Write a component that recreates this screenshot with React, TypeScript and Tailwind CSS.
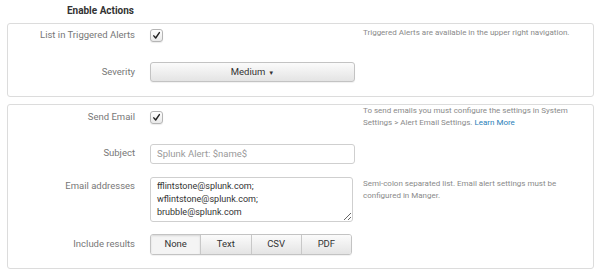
import { ReactNode } from 'react';

function Check() {
  return (
    <span className="flex h-[13px] w-[13px] items-center justify-center rounded-[3px] border border-[#b5b5b5] bg-gradient-to-b from-white to-[#e9e9e9] shadow-[0_1px_1px_rgba(0,0,0,0.08)]">
      <svg width="9" height="9" viewBox="0 0 10 10">
        <path d="M2 5.4 L4.1 7.8 L8.2 1.8" fill="none" stroke="#222" strokeWidth="1.6" strokeLinecap="round" strokeLinejoin="round" />
      </svg>
    </span>
  );
}

function Row({ label, children, help, className = '', helpClass = '' }: { label: string; children: ReactNode; help?: ReactNode; className?: string; helpClass?: string }) {
  return (
    <div className={`flex items-start ${className}`}>
      <div className="w-[127px] shrink-0 text-right text-[9.5px] leading-[14px] text-[#777]">{label}</div>
      <div className="ml-[15px] w-[205px] shrink-0">{children}</div>
      {help && <div className={`ml-[8px] w-[216px] text-[8px] leading-[12px] text-[#8a8a8a] ${helpClass}`}>{help}</div>}
    </div>
  );
}

const segments = ['None', 'Text', 'CSV', 'PDF'];

export default function App() {
  return (
    <div className="h-[275px] w-[600px] bg-white px-[7px] pt-[4px] font-['Roboto',sans-serif]">
      <div className="w-[127px] text-right text-[10px] font-bold leading-[14px] text-[#333]">Enable Actions</div>

      <div className="mt-[5px] h-[74px] w-[587px] rounded-[3px] border border-[#dcdcdc] pt-[4px]">
        <Row label="List in Triggered Alerts" help="Triggered Alerts are available in the upper right navigation." helpClass="-mt-[1px]">
          <div className="pt-[1px]">
            <Check />
          </div>
        </Row>
        <Row label="Severity" className="mt-[23px]">
          <div className="-mt-[3px] flex h-[20px] w-[205px] items-center justify-center rounded-[3px] border border-[#c3c3c3] bg-gradient-to-b from-[#fbfbfb] to-[#e4e4e4] text-[9.5px] text-[#333] shadow-[0_1px_1px_rgba(0,0,0,0.06)]">
            Medium <span className="ml-[3px] text-[6px]">▼</span>
          </div>
        </Row>
      </div>

      <div className="mt-[7px] h-[165px] w-[587px] rounded-[3px] border border-[#dcdcdc] pt-[5px]">
        <Row
          label="Send Email"
          helpClass="-mt-[5px]"
          help={
            <>
              To send emails you must configure the settings in System Settings &gt; Alert Email Settings.{' '}
              <a className="text-[#2a80b9]">Learn More</a>
            </>
          }
        >
          <div className="pt-[1px]">
            <Check />
          </div>
        </Row>
        <Row label="Subject" className="mt-[17px]">
          <div className="-mt-[2px] flex h-[20px] w-[205px] items-center rounded-[3px] border border-[#cfcfcf] px-[6px] text-[9.5px] text-[#9a9a9a]">
            Splunk Alert: $name$
          </div>
        </Row>
        <Row
          label="Email addresses"
          className="mt-[15px]"
          helpClass="-mt-[1px]"
          help="Semi-colon separated list. Email alert settings must be configured in Manger."
        >
          <textarea
            readOnly
            defaultValue={'fflintstone@splunk.com;\nwflintstone@splunk.com;\nbrubble@splunk.com'}
            className="-mt-[2px] block h-[45px] w-[203px] resize overflow-hidden rounded-[3px] border border-[#cfcfcf] px-[6px] pt-[2px] text-[9px] leading-[13px] text-[#333] outline-none"
          />
        </Row>
        <Row label="Include results" className="mt-[15px]">
          <div className="-mt-[3px] flex h-[21px] w-[202px] overflow-hidden rounded-[3px] border border-[#c3c3c3] shadow-[0_1px_1px_rgba(0,0,0,0.06)]">
            {segments.map((s, i) => (
              <div
                key={s}
                className={`flex flex-1 items-center justify-center text-[9.5px] text-[#333] ${i > 0 ? 'border-l border-[#c8c8c8]' : ''} ${
                  i === 0 ? 'bg-[#f4f4f4] shadow-[inset_0_1px_2px_rgba(0,0,0,0.12)]' : 'bg-gradient-to-b from-[#fbfbfb] to-[#e4e4e4]'
                }`}
              >
                {s}
              </div>
            ))}
          </div>
        </Row>
      </div>
    </div>
  );
}
